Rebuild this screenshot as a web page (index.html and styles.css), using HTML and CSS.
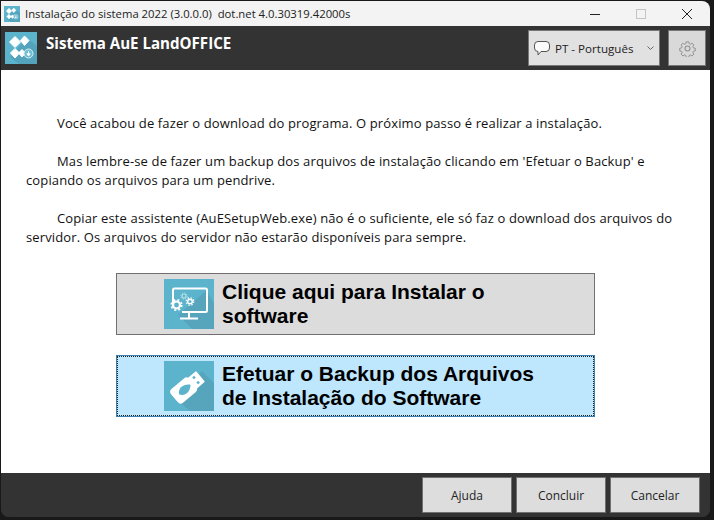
FILE: index.html
```html
<!DOCTYPE html>
<html lang="pt-BR">

<head>
  <meta charset="UTF-8">
  <title>Instalação do sistema 2022</title>
  <link rel="stylesheet" href="styles.css">
</head>

<body>
  <svg class="defs" width="0" height="0">
    <symbol id="logo" viewBox="0 0 32 32">
      <rect width="32" height="32" fill="#5cb3cc" />
      <path d="M32 14v18H14L5 25 22 6z" fill="#52a3bb" />
      <path d="M10 4.500l5.500 5.500-5.500 5.500L4.500 10zM19.500 4l4.500 4.500-4.500 5-4-5zM10 16.500l4.500 4.500-4.500 5-4.500-5zM17 17.500l3.500 3.500-3.500 4-3.500-4z" fill="#fff" stroke="#fff" stroke-linejoin="round" />
      <circle cx="23.500" cy="21.500" r="4.500" fill="#74bed3" stroke="#d8eef4" />
      <path d="M23.500 19v3M21.800 21.800h3.400l-1.700 2.200z" stroke="#fff" stroke-width="0.800" fill="#fff" />
    </symbol>
  </svg>

  <div class="window">
    <div class="titlebar">
      <svg class="app-icon-small">
        <use href="#logo" />
      </svg>
      <span class="title-text">Instalação do sistema 2022 (3.0.0.0)&nbsp; dot.net 4.0.30319.42000s</span>
      <div class="win-controls">
        <div class="win-btn">
          <svg width="10" height="10" viewBox="0 0 10 10">
            <path d="M0 5.500h10" stroke="#222" />
          </svg>
        </div>
        <div class="win-btn">
          <svg width="10" height="10" viewBox="0 0 10 10">
            <rect x="0.500" y="0.500" width="9" height="9" fill="none" stroke="#c4c4c4" />
          </svg>
        </div>
        <div class="win-btn">
          <svg width="10" height="10" viewBox="0 0 10 10">
            <path d="M0 0l10 10M10 0L0 10" stroke="#222" />
          </svg>
        </div>
      </div>
    </div>

    <div class="header">
      <svg class="app-icon">
        <use href="#logo" />
      </svg>
      <span class="app-name">Sistema AuE LandOFFICE</span>
      <div class="lang-select">
        <svg class="lang-icon" width="16" height="15" viewBox="0 0 16 15">
          <path d="M4 .5h8a3.500 3.500 0 0 1 3.500 3.500v3a3.500 3.500 0 0 1-3.500 3.500H7l-3 3.500v-3.500a3.500 3.500 0 0 1-3.500-3.500V4A3.500 3.500 0 0 1 4 .5z" fill="#fbfbfb" stroke="#555" />
        </svg>
        <span>PT - Português</span>
        <svg class="lang-caret" width="7" height="4" viewBox="0 0 7 4">
          <path d="M0.500 0.500l3 3 3-3" fill="none" stroke="#666" />
        </svg>
      </div>
      <div class="gear-btn">
        <svg width="17" height="17" viewBox="0 0 24 24" fill="none" stroke="#8f8f8f" stroke-width="1.500" stroke-linejoin="round">
          <circle cx="12" cy="12" r="3.500" />
          <path d="M10 1.500h4l.6 2.900 2.100.9 2.500-1.600 2.800 2.800-1.600 2.500.9 2.100 2.900.6v4l-2.900.6-.9 2.100 1.600 2.500-2.800 2.800-2.500-1.600-2.100.9-.6 2.900h-4l-.6-2.900-2.100-.9-2.500 1.600-2.800-2.800 1.600-2.500-.9-2.100-2.900-.6v-4l2.900-.6.9-2.100-1.600-2.500 2.800-2.800 2.500 1.600 2.100-.9z" transform="translate(1.200 1.200) scale(.9)" />
        </svg>
      </div>
    </div>

    <div class="content">
      <p class="para"><span class="indent"></span>Você acabou de fazer o download do programa. O próximo passo é realizar a instalação.</p>
      <p class="para"><span class="indent"></span>Mas lembre-se de fazer um backup dos arquivos de instalação clicando em 'Efetuar o Backup' e copiando os arquivos para um pendrive.</p>
      <p class="para"><span class="indent"></span>Copiar este assistente (AuESetupWeb.exe) não é o suficiente, ele só faz o download dos arquivos do servidor. Os arquivos do servidor não estarão disponíveis para sempre.</p>

      <div class="actions">
        <div class="big-btn">
          <svg class="big-icon" viewBox="0 0 50 50">
            <rect width="50" height="50" fill="#5cb3cc" />
            <path d="M50 24v26H28L14 36l28-24z" fill="#56a5bc" />
            <path d="M9 28V11a1.500 1.500 0 0 1 1.500-1.500h31a1.500 1.500 0 0 1 1.500 1.500v20.500a1.500 1.500 0 0 1-1.500 1.500H18" fill="none" stroke="#fff" stroke-width="2" />
            <path d="M25 33v6M16 39.500h18" stroke="#fff" stroke-width="2" />
            <circle cx="12.500" cy="26" r="3.500" fill="none" stroke="#fff" stroke-width="2.200" />
            <circle cx="12.500" cy="26" r="5.300" fill="none" stroke="#fff" stroke-width="1.600" stroke-dasharray="2 2.200" />
            <circle cx="26" cy="22.500" r="2.300" fill="none" stroke="#fff" stroke-width="1.400" />
            <circle cx="26" cy="22.500" r="3.800" fill="none" stroke="#fff" stroke-width="1.200" stroke-dasharray="1.500 1.500" />
            <circle cx="20" cy="17" r="2" fill="none" stroke="#b5e0ea" stroke-width="1.200" />
            <circle cx="20" cy="17" r="3.200" fill="none" stroke="#b5e0ea" stroke-width="1" stroke-dasharray="1.200 1.300" />
          </svg>
          <span class="big-text">Clique aqui para Instalar o software</span>
        </div>
        <div class="big-btn focused">
          <svg class="big-icon" viewBox="0 0 50 50">
            <rect width="50" height="50" fill="#5cb3cc" />
            <path d="M50 22v28H26L12 38 38 10z" fill="#56a5bc" />
            <g transform="rotate(-40 25 25)">
              <rect x="6" y="16" width="24" height="18" rx="4" fill="#fff" />
              <rect x="29" y="18" width="11" height="14" rx="1" fill="#fff" />
              <rect x="33" y="20.500" width="2.500" height="2.500" fill="#5cb3cc" />
              <rect x="33" y="27" width="2.500" height="2.500" fill="#5cb3cc" />
              <path d="M27 25C22 19.500 15 19.500 12 25c3 5.500 10 5.500 15 0z" fill="#5cb3cc" />
            </g>
          </svg>
          <span class="big-text">Efetuar o Backup dos Arquivos de Instalação do Software</span>
        </div>
      </div>
    </div>

    <div class="footer">
      <div class="foot-btn">Ajuda</div>
      <div class="foot-btn">Concluir</div>
      <div class="foot-btn">Cancelar</div>
    </div>
  </div>
</body>

</html>
```

FILE: styles.css
```css
html,
body {
  margin: 0;
  height: 100%;
  background-color: #191919;
}

body {
  font-family: "Open Sans", "Noto Sans", sans-serif;
  font-size: 12px;
  color: #111;
  overflow: hidden;
}

.defs {
  display: block;
  height: 0;
}

.window {
  width: 709px;
  height: 516px;
  margin: 1px 0 0 1px;
  display: flex;
  flex-direction: column;
  background-color: #333;
  border-radius: 0 8px 8px 8px;
  overflow: hidden;
}

.titlebar {
  height: 25px;
  display: flex;
  align-items: center;
  background-color: #f3f3f3;
  padding-left: 3px;
  flex: none;
}

.app-icon-small {
  width: 16px;
  height: 16px;
  margin-right: 5px;
}

.title-text {
  font-size: 11.300px;
  color: #222;
}

.win-controls {
  margin-left: auto;
  display: flex;
}

.win-btn {
  width: 46px;
  height: 25px;
  display: flex;
  align-items: center;
  justify-content: center;
}

.header {
  height: 44px;
  flex: none;
  display: flex;
  align-items: center;
  background-color: #333;
  padding: 0 4px;
}

.app-icon {
  width: 32px;
  height: 32px;
  margin-right: 9px;
}

.app-name {
  font-weight: 700;
  font-size: 15.100px;
  color: #fff;
  margin-bottom: 11px;
}

.lang-select {
  margin-left: auto;
  width: 132px;
  height: 36px;
  box-sizing: border-box;
  display: flex;
  align-items: center;
  background-color: #e1e1e1;
  border: 1px solid #777;
  padding-left: 5px;
  font-size: 11.600px;
  color: #222;
}

.lang-icon {
  margin-right: 5px;
}

.lang-caret {
  margin-left: auto;
  margin-right: 5px;
}

.gear-btn {
  margin-left: 8px;
  width: 38px;
  height: 36px;
  box-sizing: border-box;
  display: flex;
  align-items: center;
  justify-content: center;
  background-color: #d9d9d9;
  border: 1px solid #777;
}

.content {
  flex: 1;
  background-color: #fff;
  padding: 44px 25px 0;
}

.para {
  margin: 0 0 19px;
  font-size: 13px;
  letter-spacing: 0.130px;
  line-height: 19px;
}

.indent {
  display: inline-block;
  width: 31px;
}

.actions {
  display: flex;
  flex-direction: column;
  gap: 20px;
  margin: 26px 0 0 90px;
}

.big-btn {
  box-sizing: border-box;
  width: 479px;
  height: 62px;
  display: flex;
  align-items: center;
  background-color: #dcdcdc;
  border: 1px solid #707070;
  padding-left: 47px;
}

.big-btn.focused {
  background-color: #bee6fd;
  border-color: #3c7fb1;
  outline: 1px dotted #222;
  outline-offset: -2px;
}

.big-icon {
  width: 50px;
  height: 50px;
  flex: none;
  margin-right: 8px;
}

.big-text {
  font-family: "Liberation Sans", sans-serif;
  font-weight: 700;
  font-size: 21px;
  line-height: 24px;
  color: #000;
  width: 330px;
}

.footer {
  height: 44px;
  flex: none;
  display: flex;
  justify-content: flex-end;
  align-items: center;
  gap: 4px;
  background-color: #333;
  padding-right: 10px;
}

.foot-btn {
  box-sizing: border-box;
  width: 90px;
  height: 36px;
  display: flex;
  align-items: center;
  justify-content: center;
  background-color: #dddddd;
  border: 1px solid #707070;
  color: #222;
}
```
